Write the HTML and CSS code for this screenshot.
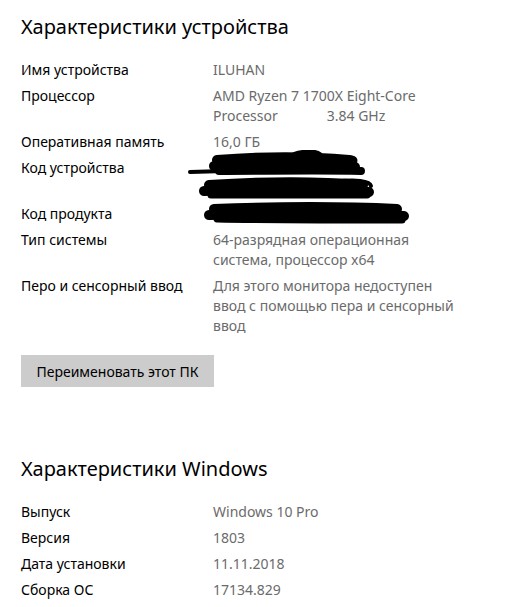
FILE: index.html
```html
<!DOCTYPE html>
<html lang="ru">
<head>
  <meta charset="UTF-8">
  <title>О системе</title>
  <link rel="stylesheet" href="styles.css">
</head>
<body>

  <section class="section">
    <h1>Характеристики устройства</h1>
    <div class="specs">
      <div class="label">Имя устройства</div>
      <div class="value">ILUHAN</div>

      <div class="label">Процессор</div>
      <div class="value">AMD Ryzen 7 1700X Eight-Core Processor<span class="freq">3.84 GHz</span></div>

      <div class="label">Оперативная память</div>
      <div class="value">16,0 ГБ</div>

      <div class="label">Код устройства</div>
      <div class="value hidden-id">
        0000000-0000-0000<br>0000-000000000
        <!-- закрашено поверх кодов -->
        <svg class="scribble" width="230" height="78" viewBox="0 0 230 78">
          <g fill="none" stroke="#000" stroke-linecap="round" stroke-linejoin="round">
            <path stroke-width="4" d="M5 22 L40 21"/>
            <path stroke-width="10" d="M32 10 C70 7 120 6 164 10"/>
            <path stroke-width="10" d="M29 16 C80 14 130 13 170 17"/>
            <path stroke-width="8" d="M34 21 C80 21 130 20 176 21"/>
            <path stroke-width="4" d="M105 7 C110 1 130 0 135 4"/>
            <path stroke-width="4" d="M160 8 C168 6 172 9 170 12"/>
            <path stroke-width="10" d="M24 35 C70 32 130 31 178 35"/>
            <path stroke-width="10" d="M19 41 C70 39 130 39 184 42"/>
            <path stroke-width="7" d="M26 45 C80 45 140 45 182 45"/>
            <path stroke-width="4" d="M150 32 C170 29 185 31 186 36"/>
            <path stroke-width="10" d="M29 59 C80 57 150 56 212 59"/>
            <path stroke-width="10" d="M24 65 C90 63 160 63 219 66"/>
            <path stroke-width="7" d="M32 69 C90 70 160 70 217 70"/>
          </g>
        </svg>
      </div>

      <div class="label">Код продукта</div>
      <div class="value hidden-id">00000-00000-00000-AA</div>

      <div class="label">Тип системы</div>
      <div class="value">64-разрядная операционная система, процессор x64</div>

      <div class="label">Перо и сенсорный ввод</div>
      <div class="value">Для этого монитора недоступен ввод с помощью пера и сенсорный ввод</div>
    </div>

    <button class="rename-btn">Переименовать этот ПК</button>
  </section>

  <section class="section windows">
    <h1>Характеристики Windows</h1>
    <div class="specs">
      <div class="label">Выпуск</div>
      <div class="value">Windows 10 Pro</div>

      <div class="label">Версия</div>
      <div class="value">1803</div>

      <div class="label">Дата установки</div>
      <div class="value">11.11.2018</div>

      <div class="label">Сборка ОС</div>
      <div class="value">17134.829</div>
    </div>
  </section>

</body>
</html>
```

FILE: styles.css
```css
body {
  font-family: 'Noto Sans', 'Open Sans', sans-serif;
  background: #ffffff;
  color: #000;
  margin: 0;
  padding: 0 21px;
}

h1 {
  font-size: 20px;
  font-weight: normal;
  margin: 0;
  line-height: 28px;
}

.section {
  padding-top: 13px;
}

.section.windows {
  padding-top: 68px;
}

.specs {
  display: grid;
  grid-template-columns: 192px 250px;
  row-gap: 6px;
  margin-top: 19px;
  font-size: 14px;
  line-height: 20px;
}

.label {
  color: #000;
}

.value {
  color: #6b6b6b;
}

.freq {
  margin-left: 49px;
}

.hidden-id {
  position: relative;
  color: #000;
}

.scribble {
  position: absolute;
  left: -28px;
  top: -8px;
}

.rename-btn {
  display: block;
  margin-top: 19px;
  background: #cccccc;
  border: none;
  padding: 0 14px;
  height: 32px;
  width: 193px;
  font-family: 'Noto Sans', 'Open Sans', sans-serif;
  font-size: 14px;
  color: #000;
  cursor: pointer;
}
```
